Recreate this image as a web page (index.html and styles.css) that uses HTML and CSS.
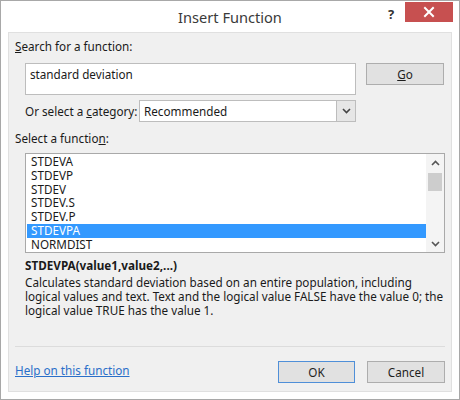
FILE: index.html
```html
<!DOCTYPE html>
<html>
<head>
<meta charset="utf-8">
<link rel="stylesheet" href="styles.css">
</head>
<body>
<div class="window">
  <div class="titlebar">
    <div class="title">Insert Function</div>
    <div class="help">?</div>
    <div class="close">
      <svg width="12" height="12" viewBox="0 0 12 12"><path d="M2 2 L10 10 M10 2 L2 10" stroke="#fff" stroke-width="2" stroke-linecap="square"/></svg>
    </div>
  </div>
  <div class="panel">
    <div class="label"><u>S</u>earch for a function:</div>
    <div class="search-row">
      <div class="search-box">standard deviation</div>
      <div class="btn go"><u>G</u>o</div>
    </div>
    <div class="cat-row">
      <div class="cat-label">Or select a <u>c</u>ategory:</div>
      <div class="select">
        <div class="select-value">Recommended</div>
        <div class="select-btn">
          <svg width="9" height="6" viewBox="0 0 9 6"><path d="M1 1 L4.5 4.5 L8 1" fill="none" stroke="#444" stroke-width="1.6"/></svg>
        </div>
      </div>
    </div>
    <div class="label label-fn">Select a functio<u>n</u>:</div>
    <div class="list">
      <div class="items">
        <div class="item">STDEVA</div>
        <div class="item">STDEVP</div>
        <div class="item">STDEV</div>
        <div class="item">STDEV.S</div>
        <div class="item">STDEV.P</div>
        <div class="item selected">STDEVPA</div>
        <div class="item">NORMDIST</div>
      </div>
      <div class="scrollbar">
        <div class="arrow">
          <svg width="9" height="6" viewBox="0 0 9 6"><path d="M1 5 L4.5 1.5 L8 5" fill="none" stroke="#555" stroke-width="1.6"/></svg>
        </div>
        <div class="track"><div class="thumb"></div></div>
        <div class="arrow">
          <svg width="9" height="6" viewBox="0 0 9 6"><path d="M1 1 L4.5 4.5 L8 1" fill="none" stroke="#555" stroke-width="1.6"/></svg>
        </div>
      </div>
    </div>
    <div class="signature">STDEVPA(value1,value2,...)</div>
    <div class="desc">Calculates standard deviation based on an entire population, including logical values and text. Text and the logical value FALSE have the value 0; the logical value TRUE has the value 1.</div>
    <div class="separator"></div>
    <div class="bottom-row">
      <a class="link">Help on this function</a>
      <div class="buttons">
        <div class="btn ok">OK</div>
        <div class="btn cancel">Cancel</div>
      </div>
    </div>
  </div>
</div>
</body>
</html>
```

FILE: styles.css
```css
html, body {
  margin: 0;
  padding: 0;
  background: #ffffff;
}
body {
  font-family: "Noto Sans", "Open Sans", sans-serif;
  font-size: 11.7px;
  color: #1a1a1a;
}
.window {
  width: 460px;
  height: 400px;
  box-sizing: border-box;
  border: 1px solid #a8a8a8;
  background: #ffffff;
  display: flex;
  flex-direction: column;
}
.titlebar {
  height: 31px;
  display: flex;
  align-items: flex-start;
  position: relative;
}
.title {
  position: absolute;
  left: 0;
  right: 0;
  top: 6px;
  text-align: center;
  font-size: 14.6px;
  color: #3a3a3a;
}
.help {
  margin-left: auto;
  margin-top: 4px;
  font-weight: bold;
  font-size: 13px;
  color: #333;
  width: 12px;
}
.close {
  margin-left: 5px;
  margin-top: 1px;
  margin-right: 6px;
  width: 48px;
  height: 20px;
  background: #c75050;
  display: flex;
  align-items: center;
  justify-content: center;
}
.panel {
  margin: 0 7px 7px 7px;
  flex: 1;
  background: #f0f0f0;
  border: 1px solid #e0e0e0;
  padding: 6px 6px 0 6px;
  display: flex;
  flex-direction: column;
}
.label {
  line-height: 14px;
  height: 14px;
}
.search-row {
  display: flex;
  align-items: flex-start;
  margin-top: 10px;
  margin-left: 10px;
}
.search-box {
  width: 331px;
  height: 32px;
  box-sizing: border-box;
  border: 1px solid #bdbdbd;
  background: #fff;
  padding: 2px 4px;
  line-height: 16px;
}
.btn {
  box-sizing: border-box;
  height: 22px;
  border: 1px solid #adadad;
  background: #e1e1e1;
  display: flex;
  align-items: center;
  justify-content: center;
  color: #1e1e1e;
}
.go {
  width: 78px;
  margin-left: 10px;
}
.cat-row {
  display: flex;
  align-items: center;
  margin-top: 5px;
  margin-left: 10px;
}
.cat-label {
  width: 114px;
  white-space: nowrap;
}
.select {
  width: 217px;
  height: 22px;
  box-sizing: border-box;
  border: 1px solid #bdbdbd;
  background: #fff;
  display: flex;
}
.select-value {
  flex: 1;
  padding-left: 4px;
  line-height: 20px;
}
.select-btn {
  width: 18px;
  background: #e6e6e6;
  border-left: 1px solid #bdbdbd;
  display: flex;
  align-items: center;
  justify-content: center;
}
.label-fn {
  margin-top: 9px;
}
.list {
  margin-top: 8px;
  margin-left: 10px;
  width: 420px;
  height: 100px;
  box-sizing: border-box;
  border: 1px solid #a9a9a9;
  background: #fff;
  display: flex;
}
.items {
  flex: 1;
  padding: 1px 0 0 1px;
}
.item {
  height: 13.8px;
  line-height: 13.8px;
  padding-left: 4px;
}
.selected {
  background: #3399ff;
  color: #fff;
}
.scrollbar {
  width: 18px;
  display: flex;
  flex-direction: column;
  background: #f4f4f4;
}
.arrow {
  height: 17px;
  display: flex;
  align-items: center;
  justify-content: center;
}
.track {
  flex: 1;
  padding: 2px 2px 0 2px;
}
.thumb {
  height: 18px;
  background: #cdcdcd;
}
.signature {
  margin-top: 5px;
  margin-left: 10px;
  font-weight: bold;
  line-height: 14px;
}
.desc {
  margin-top: 3px;
  margin-left: 10px;
  width: 420px;
  line-height: 14px;
}
.separator {
  margin-top: 29px;
  height: 1px;
  background: #dcdcdc;
}
.bottom-row {
  display: flex;
  align-items: center;
  margin-top: 14px;
}
.link {
  color: #2a6fc9;
  text-decoration: underline;
  margin-top: -4px;
}
.buttons {
  margin-left: auto;
  display: flex;
}
.ok {
  width: 77px;
  border-color: #4f8fd8;
}
.cancel {
  width: 78px;
  margin-left: 12px;
}
```
